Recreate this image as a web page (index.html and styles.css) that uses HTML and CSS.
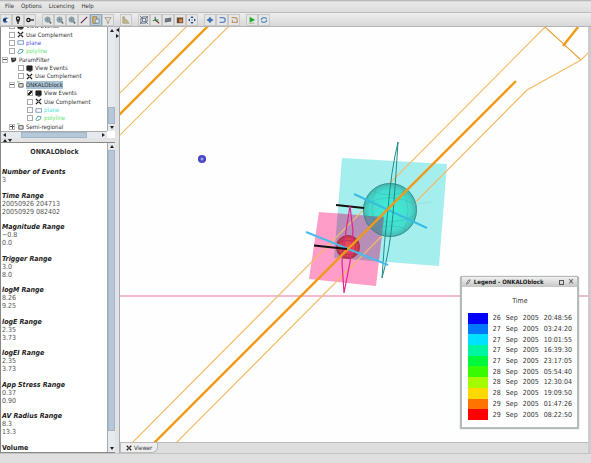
FILE: index.html
```html
<!DOCTYPE html>
<html lang="en">
<head>
<meta charset="utf-8">
<title>Viewer - ONKALOblock</title>
<link rel="stylesheet" href="styles.css">
</head>
<body>
<svg class="defs" aria-hidden="true">
  <symbol id="i-node" viewBox="0 0 10 10"><path d="M1 5.500Q1 2 5 2t3 3.500q-1 3-4 3T1 5.500z" fill="#2b5d9c"/><path d="M2 5h4" stroke="#16283f" stroke-width="2"/><circle cx="7" cy="5" r="2" fill="#fff"/></symbol>
  <symbol id="i-pin" viewBox="0 0 10 10"><circle cx="5" cy="3" r="2" fill="#ddd" stroke="#111" stroke-width="1.500"/><path d="M5 5v5M3 6h4" stroke="#111" stroke-width="1.500"/></symbol>
  <symbol id="i-key" viewBox="0 0 10 10"><circle cx="3" cy="5" r="2" fill="#ddd" stroke="#111" stroke-width="1.500"/><path d="M5 5h5" stroke="#111" stroke-width="1.500"/></symbol>
  <symbol id="i-zoom" viewBox="0 0 10 10"><circle cx="4.500" cy="4.500" r="3.300" fill="#9aabb5" stroke="#7b8e99"/><path d="M3 4.500h3M4.500 3v3" stroke="#5a8a86"/><path d="M6.500 6.500L9 9.500" stroke="#777" stroke-width="2"/></symbol>
  <symbol id="i-line" viewBox="0 0 10 10"><path d="M1 9L9 1" stroke="#5a2634" stroke-width="1.300"/></symbol>
  <symbol id="i-layers" viewBox="0 0 10 10"><path d="M1 1h5v8H1z" fill="#e9bd67" stroke="#8b713a"/><path d="M4 4h5v5H4z" fill="#d6e3f3" stroke="#687f9d"/></symbol>
  <symbol id="i-filter" viewBox="0 0 10 10"><path d="M1 2h8L6 6v3H4V6z" fill="#e3dfd2" stroke="#99978c"/></symbol>
  <symbol id="i-chart" viewBox="0 0 10 10"><path d="M1 1v8h8L5 4H3V1z" fill="#c5b77f" stroke="#a39c88"/></symbol>
  <symbol id="i-cube" viewBox="0 0 10 10"><path d="M1 3h6v6H1zM3 1h6v6H3zM0 10l3-3M7 3l3-3M7 7l3 3M0 0l3 3" fill="none" stroke="#5a687c"/></symbol>
  <symbol id="i-axes" viewBox="0 0 10 10"><path d="M4 5V1" stroke="#36537a" stroke-width="1.300"/><path d="M4 5L1 6" stroke="#26883b" stroke-width="1.500"/><path d="M4 5l5 4" stroke="#8d322e" stroke-width="1.500"/><path d="M4 5h4" stroke="#269045" stroke-width="1.500"/></symbol>
  <symbol id="i-film" viewBox="0 0 10 10"><path d="M1 3l8-1v5l-8 1z" fill="#686c79"/><path d="M2 5h6" stroke="#9a9fa8" stroke-dasharray="1 1"/></symbol>
  <symbol id="i-box" viewBox="0 0 10 10"><path d="M1 2h8v7H1z" fill="#634c40"/><path d="M4 4h4v4H4z" fill="#df8a43"/><path d="M1 2h8" stroke="#b98e64"/></symbol>
  <symbol id="i-move" viewBox="0 0 10 10"><path d="M5 0l2 2.500H3zM5 10L3 7.500h4zM0 5l2.500-2v4zM10 5L7.500 7V3z" fill="#204d80"/><path d="M4 4h2v2H4z" fill="#8db0cf"/></symbol>
  <symbol id="i-cross" viewBox="0 0 10 10"><path d="M5 1l2 2.500L9.500 5 7 6.500 5 9 3 6.500.500 5 3 3.500z" fill="#4572b5"/></symbol>
  <symbol id="i-turn" viewBox="0 0 10 10"><path d="M2 2h4q3 0 3 3t-3 3H2" fill="#dbe6f6" stroke="#6483b8" stroke-width="1.600"/></symbol>
  <symbol id="i-turn2" viewBox="0 0 10 10"><path d="M2 2h4q3 0 3 3v3H3V5" fill="#dbe6f6" stroke="#c89660" stroke-width="1.600"/></symbol>
  <symbol id="i-play" viewBox="0 0 10 10"><path d="M2 1l7 4-7 3z" fill="#20a829"/><path d="M1 9h7" stroke="#8da889"/></symbol>
  <symbol id="i-sync" viewBox="0 0 10 10"><path d="M1.500 5Q2 2 5 2t3 2M8.500 5Q8 8 5 8T2 6" fill="none" stroke="#5f94bd" stroke-width="1.800"/></symbol>
  <symbol id="i-screen" viewBox="0 0 8 8"><path d="M1 1h6v5H1zM3 7h3" fill="#222" stroke="#222"/></symbol>
  <symbol id="i-comp" viewBox="0 0 8 8"><path d="M1 1l6 6M7 1L1 7" stroke="#222" stroke-width="1.600"/><path d="M2 4h4" stroke="#999"/></symbol>
  <symbol id="i-plane" viewBox="0 0 8 8"><path d="M1 2h6.500v4H1z" fill="#fff" stroke="#7090bd"/></symbol>
  <symbol id="i-poly" viewBox="0 0 8 8"><path d="M3 1.500l4 .500-1 3-4 1.500L1 5z" fill="#fff" stroke="#4a9b91"/></symbol>
  <symbol id="i-folder" viewBox="0 0 8 8"><path d="M0 1h3" stroke="#6aa36a"/><path d="M2 3h5v4H2z" fill="#ddd" stroke="#555"/></symbol>
  <symbol id="i-param" viewBox="0 0 8 8"><path d="M1 2h6v3L4 7H2z" fill="#333"/><path d="M3 3h3v1H3z" fill="#bbb"/></symbol>
</svg>

<div class="app">
  <nav class="menubar">
    <button>File</button><button>Options</button><button>Licencing</button><button>Help</button>
  </nav>
  <div class="toolbar">
    <div class="tools">
      <button aria-label="Show node"><svg><use href="#i-node"/></svg></button>
      <button aria-label="Pin"><svg><use href="#i-pin"/></svg></button>
      <button aria-label="Key"><svg><use href="#i-key"/></svg></button>
    </div>
    <div class="tools">
      <button aria-label="Zoom in"><svg><use href="#i-zoom"/></svg></button>
      <button aria-label="Zoom out"><svg><use href="#i-zoom"/></svg></button>
      <button aria-label="Zoom fit"><svg><use href="#i-zoom"/></svg></button>
      <button aria-label="Line"><svg><use href="#i-line"/></svg></button>
      <button class="on" aria-label="Layers"><svg><use href="#i-layers"/></svg></button>
      <button aria-label="Filter"><svg><use href="#i-filter"/></svg></button>
    </div>
    <div class="tools">
      <button aria-label="Chart"><svg><use href="#i-chart"/></svg></button>
    </div>
    <div class="tools">
      <button aria-label="Bounds"><svg><use href="#i-cube"/></svg></button>
      <button aria-label="Axes"><svg><use href="#i-axes"/></svg></button>
      <button aria-label="Film"><svg><use href="#i-film"/></svg></button>
      <button aria-label="Snapshot"><svg><use href="#i-box"/></svg></button>
      <button aria-label="Move"><svg><use href="#i-move"/></svg></button>
    </div>
    <div class="tools">
      <button aria-label="Centre"><svg><use href="#i-cross"/></svg></button>
      <button aria-label="Rotate"><svg><use href="#i-turn"/></svg></button>
      <button aria-label="Reset rotation"><svg><use href="#i-turn2"/></svg></button>
    </div>
    <div class="tools">
      <button aria-label="Play"><svg><use href="#i-play"/></svg></button>
      <button aria-label="Refresh"><svg><use href="#i-sync"/></svg></button>
    </div>
  </div>

  <main class="main">
    <aside class="side">
      <section class="tree-pane">
        <div class="tree">
          <label class="row l1"><input type="checkbox"><svg><use href="#i-screen"/></svg>View Events</label>
          <label class="row l1"><input type="checkbox"><svg><use href="#i-comp"/></svg>Use Complement</label>
          <label class="row l1 blue"><input type="checkbox"><svg><use href="#i-plane"/></svg>plane</label>
          <label class="row l1 green"><input type="checkbox"><svg><use href="#i-poly"/></svg>polyline</label>
          <div class="row l0"><i class="toggle"></i><svg><use href="#i-param"/></svg>ParamFilter</div>
          <label class="row l2"><input type="checkbox"><svg><use href="#i-screen"/></svg>View Events</label>
          <label class="row l2"><input type="checkbox"><svg><use href="#i-comp"/></svg>Use Complement</label>
          <div class="row l1"><i class="toggle"></i><svg><use href="#i-folder"/></svg><span class="selected">ONKALOblock</span></div>
          <label class="row l3"><input type="checkbox" checked><svg><use href="#i-screen"/></svg>View Events</label>
          <label class="row l3"><input type="checkbox"><svg><use href="#i-comp"/></svg>Use Complement</label>
          <label class="row l3 aqua"><input type="checkbox"><svg><use href="#i-plane"/></svg>plane</label>
          <label class="row l3 green"><input type="checkbox"><svg><use href="#i-poly"/></svg>polyline</label>
          <div class="row l1"><i class="toggle plus"></i><svg><use href="#i-folder"/></svg>Semi-regional</div>
        </div>
        <div class="vbar"><i class="arrow up"></i><i class="thumb low"></i><i class="arrow down"></i></div>
        <div class="hbar"><i class="arrow left"></i><i class="thumb"></i><i class="arrow right"></i></div>
      </section>
      <div class="hsplit"><i class="arrow up"></i><i class="arrow down"></i></div>
      <section class="info-pane">
        <div class="info">
          <h1>ONKALOblock</h1>
          <dl>
            <div><dt>Number of Events</dt><dd>3</dd></div>
            <div><dt>Time Range</dt><dd>20050926 204713</dd><dd>20050929 082402</dd></div>
            <div><dt>Magnitude Range</dt><dd>−0.8</dd><dd>0.0</dd></div>
            <div><dt>Trigger Range</dt><dd>3.0</dd><dd>8.0</dd></div>
            <div><dt>logM Range</dt><dd>8.26</dd><dd>9.25</dd></div>
            <div><dt>logE Range</dt><dd>2.35</dd><dd>3.73</dd></div>
            <div><dt>logEI Range</dt><dd>2.35</dd><dd>3.73</dd></div>
            <div><dt>App Stress Range</dt><dd>0.37</dd><dd>0.90</dd></div>
            <div><dt>AV Radius Range</dt><dd>8.3</dd><dd>13.3</dd></div>
            <div><dt class="plain">Volume</dt></div>
          </dl>
        </div>
        <div class="vbar"><i class="arrow up"></i><i class="thumb high"></i><i class="arrow down"></i></div>
      </section>
    </aside>
    <div class="vsplit"><i class="arrow left"></i><i class="arrow right"></i></div>
    <section class="view">
      <div class="stage">
        <svg class="scene" viewBox="120 27 468 415" preserveAspectRatio="xMidYMid slice" role="img" aria-label="Event blocks and tunnels">
          <defs>
            <radialGradient id="g-teal"><stop offset="0" stop-color="#3df0d8"/><stop offset=".75" stop-color="#45dccd"/><stop offset="1" stop-color="#46b4b0"/></radialGradient>
            <radialGradient id="g-red"><stop offset="0" stop-color="#f0525c"/><stop offset=".7" stop-color="#db4153"/><stop offset="1" stop-color="#a53349"/></radialGradient>
            <clipPath id="c-pink"><path d="M319 212l65 5-8 69-67-7z"/></clipPath>
            <clipPath id="c-ball"><circle cx="390" cy="210" r="27"/></clipPath>
          </defs>
          <path d="M119 296H591" stroke="#e8789b"/>
          <path d="M342 158l105 6-8 102-105-8z" fill="#a5eeee"/>
          <path d="M319 212l65 5-8 69-67-7z" fill="#fe9dc7"/>
          <g clip-path="url(#c-pink)"><path d="M342 158l105 6-8 102-105-8z" fill="#b78eb8"/></g>
          <g class="thin">
            <path d="M187 26L119 94M229 26L119 136"/>
            <path d="M132 443L545 27L581 60L591 50M176 443L527 90L581 60"/>
          </g>
          <path d="M545 27L581 60" class="edge"/>
          <circle cx="390" cy="210" r="27" fill="url(#g-teal)"/>
          <g clip-path="url(#c-ball)"><g clip-path="url(#c-pink)"><path d="M360 205h30v40h-30z" fill="#6c899f"/></g></g>
          <g fill="none" stroke="#289d99" stroke-width=".6" opacity=".45">
            <circle cx="390" cy="210" r="26.500" stroke="#25685f" stroke-width="1"/>
            <path d="M364 205Q390 190 416 205M364 215Q390 229 416 215M377 187Q366 210 379 234M401 186Q414 210 403 234M372 191Q390 199 408 190M372 230Q390 222 408 230"/>
            <path d="M364 210L432 202" stroke="#7dbdb2"/>
          </g>
          <path d="M336 205L364 208" stroke="#111" stroke-width="2"/>
          <path d="M354 194L427 228" stroke="#38bddf" stroke-width="2"/>
          <path d="M398 142Q391 171 388 209Q384 242 382 278Q390 250 393 214Q396 176 398 142z" fill="none" stroke="#218b8b"/>
          <circle cx="348" cy="247" r="12" fill="url(#g-red)"/>
          <path d="M337 243Q348 238 359 243M337 252Q348 257 359 252M344 236Q340 247 344 258M353 236Q358 247 353 258" fill="none" stroke="#932a42" stroke-width=".5"/>
          <path d="M350 206L353 231L350 262L344 293L342 262L346 231z" fill="none" stroke="#e02491" stroke-width="1.200"/>
          <path d="M306 232L388 265" stroke="#49bbec" stroke-width="2"/>
          <g class="thick"><path d="M208 26L119 115M154 443L516 81M578 27L563 46"/></g>
          <path d="M314 245.500L347 249" stroke="#111" stroke-width="2"/>
          <circle cx="202" cy="159" r="2.800" fill="#a1a1f3" stroke="#4848c5" stroke-width="2.600"/>
        </svg>
        <section class="legend">
          <header><svg viewBox="0 0 8 8"><path d="M2 7L4 2l3-1-2 4z" fill="#ddd" stroke="#666"/></svg><h2>Legend - ONKALOblock</h2><button aria-label="Maximise" class="max"></button><button aria-label="Close" class="close">×</button></header>
          <table>
            <caption>Time</caption>
            <tbody>
              <tr><td class="c1"></td><td>26</td><td>Sep</td><td>2005</td><td>20:48:56</td></tr>
              <tr><td class="c2"></td><td>27</td><td>Sep</td><td>2005</td><td>03:24:20</td></tr>
              <tr><td class="c3"></td><td>27</td><td>Sep</td><td>2005</td><td>10:01:55</td></tr>
              <tr><td class="c4"></td><td>27</td><td>Sep</td><td>2005</td><td>16:39:30</td></tr>
              <tr><td class="c5"></td><td>27</td><td>Sep</td><td>2005</td><td>23:17:05</td></tr>
              <tr><td class="c6"></td><td>28</td><td>Sep</td><td>2005</td><td>05:54:40</td></tr>
              <tr><td class="c7"></td><td>28</td><td>Sep</td><td>2005</td><td>12:30:04</td></tr>
              <tr><td class="c8"></td><td>28</td><td>Sep</td><td>2005</td><td>19:09:50</td></tr>
              <tr><td class="c9"></td><td>29</td><td>Sep</td><td>2005</td><td>01:47:26</td></tr>
              <tr><td class="c10"></td><td>29</td><td>Sep</td><td>2005</td><td>08:22:50</td></tr>
            </tbody>
          </table>
        </section>
      </div>
      <div class="tabs"><button><svg><use href="#i-comp"/></svg>Viewer</button></div>
    </section>
  </main>
  <footer class="status"></footer>
</div>
</body>
</html>
```

FILE: styles.css
```css
* { box-sizing: border-box; }
html, body { height: 100%; margin: 0; }
body { font: 6px/8px "DejaVu Sans Condensed", "DejaVu Sans", sans-serif; color: #333; background: #dedede; overflow: hidden; }
button { font: inherit; color: inherit; border: 0; padding: 0; background: none; }
.defs { position: absolute; width: 0; height: 0; }
.app { height: 100vh; display: flex; flex-direction: column; }

.menubar { flex: none; height: 13px; display: flex; align-items: center; gap: 7px; padding-left: 5px; background: linear-gradient(#aaa, #e9e9e9 2px, #dcdcdc); border-bottom: 1px solid #bcbcbc; }
.toolbar { flex: none; height: 14px; display: flex; align-items: center; gap: 6px; background: linear-gradient(#eee, #d8d8d8); border-bottom: 1px solid #b4b4b4; }
.tools { display: flex; }
.tools button { width: 12px; height: 12px; display: grid; place-items: center; border: 1px solid #c8c8c8; background: #e6e6e6; }
.tools button.on { background: #b9cddd; border-color: #91a5b5; }
.tools svg { width: 8px; height: 8px; }

.main { flex: 1; min-height: 0; display: flex; }
.side { flex: none; width: 115px; display: flex; flex-direction: column; border-left: 1px solid #888; }
.tree-pane { flex: none; height: 111px; overflow: hidden; display: grid; grid-template: minmax(0, 1fr) 7px / minmax(0, 1fr) 8px; background: #fff; }
.tree { display: grid; grid-template-rows: repeat(13, 1fr); height: 109px; align-self: end; }
.tree-pane .hbar { grid-column: 1; }
.row { display: flex; align-items: center; gap: 2px; white-space: nowrap; min-height: 0; }
.row svg { width: 7px; height: 7px; flex: none; }
.l0 { padding-left: 1px; }
.l1 { padding-left: 8px; }
.l2 { padding-left: 17px; }
.l3 { padding-left: 26px; }
.row input { appearance: none; width: 6px; height: 6px; margin: 0; flex: none; border: 1px solid #aaa; background: #fff; }
.row input:checked { background: linear-gradient(135deg, #fff 35%, #222 35%, #222 65%, #fff 65%); }
.blue { color: #4747e8; }
.green { color: #5fe56d; }
.aqua { color: #3de5d4; }
.selected { background: #a9c3d6; }
.toggle { width: 6px; height: 6px; border: 1px solid #bbb; background: linear-gradient(#555, #555) center / 4px 1px no-repeat; }
.toggle.plus { background: linear-gradient(#555, #555) center / 4px 1px no-repeat, linear-gradient(#555, #555) center / 1px 4px no-repeat; }

.vbar { display: flex; flex-direction: column; align-items: center; justify-content: space-between; background: #e6e9ed; border-left: 1px solid #aaa; padding: 2px 0; }
.hbar { display: flex; align-items: center; justify-content: space-between; background: #e6e9ed; border-top: 1px solid #aaa; padding: 0 2px; }
.thumb { background: #b4c8da; border: 1px solid #a3b6c8; }
.hbar .thumb { width: 66px; height: 6px; }
.vbar .thumb { width: 7px; }
.thumb.low { height: 17px; margin: auto 0 2px; }
.thumb.high { flex: 1; margin: 2px 0 16px; }
.arrow { border: 2px solid transparent; }
.arrow.up { border-bottom: 3px solid #222; border-top: 0; }
.arrow.down { border-top: 3px solid #222; border-bottom: 0; }
.arrow.left { border-right: 3px solid #222; border-left: 0; }
.arrow.right { border-left: 3px solid #222; border-right: 0; }
.hsplit { flex: none; height: 5px; display: flex; align-items: center; gap: 1px; padding-left: 2px; background: #e3e3e3; border-bottom: 1px solid #888; }
.info-pane { flex: 1; min-height: 0; display: grid; grid-template-columns: minmax(0, 1fr) 8px; background: #fff; border-bottom: 1px solid #888; }
.info { display: flex; flex-direction: column; min-height: 0; padding: 5px 0 0 1px; font-size: 7px; }
h1 { font-size: 7px; line-height: 8px; margin: 0 0 12px; text-align: center; }
dl { flex: 1; margin: 0; display: flex; flex-direction: column; justify-content: space-between; }
dt { font-weight: bold; font-style: italic; color: #222; }
dt.plain { font-style: normal; }
dd { margin: 0; color: #555; }

.vsplit { flex: none; width: 5px; display: flex; flex-direction: column; align-items: center; gap: 2px; padding-top: 1px; background: #e3e3e3; border-right: 1px solid #aaa; }
.view { flex: 1; min-width: 0; display: flex; flex-direction: column; border-right: 3px solid #ccc; }
.stage { flex: 1; min-height: 0; position: relative; background: #fefefe; }
.scene { display: block; width: 100%; height: 100%; }
.thin { fill: none; stroke: #f4bb66; stroke-width: 1.2; }
.edge { stroke: #e6a03c; }
.thick { fill: none; stroke: #f19a14; stroke-width: 2.4; }
.tabs { flex: none; height: 11px; display: flex; background: #dedede; border-top: 1px solid #bbb; }
.tabs button { display: flex; align-items: center; gap: 2px; padding: 0 5px; background: #eee; border: 1px solid #bbb; border-top: 0; border-radius: 0 0 6px 0; }
.tabs svg { width: 6px; height: 6px; }
.status { flex: none; height: 10px; background: #dfdfdf; border-top: 1px solid #c4c4c4; }

.legend { position: absolute; right: 9px; bottom: 13px; background: #fff; border: 2px solid #b5bbbb; border-top-width: 1px; border-radius: 3px 3px 0 0; box-shadow: 0 0 1px #777; }
.legend header { display: flex; align-items: center; height: 10px; padding: 0 3px; background: linear-gradient(#f1f1f1, #c6c6c6); }
.legend header svg { width: 6px; height: 6px; margin-right: 3px; }
h2 { flex: 1; margin: 0; font-size: 6px; color: #222; white-space: nowrap; }
.max { width: 5px; height: 5px; border: 1px solid #555; }
.close { margin-left: 4px; font-size: 8px; }
table { border-collapse: collapse; height: 107px; margin: 0 5px 7px 6px; font-size: 7px; line-height: 8px; }
caption { padding: 10px 0 8px; }
td { height: 10px; padding: 0 0 0 5px; }
td:first-child { width: 20px; padding: 0; }
.c1 { background: #0000fe; }
.c2 { background: #0078ff; }
.c3 { background: #00e0ff; }
.c4 { background: #00f5a0; }
.c5 { background: #00f83c; }
.c6 { background: #3afa00; }
.c7 { background: #a5fb00; }
.c8 { background: #ffd800; }
.c9 { background: #ff7400; }
.c10 { background: #fe0000; }
```
